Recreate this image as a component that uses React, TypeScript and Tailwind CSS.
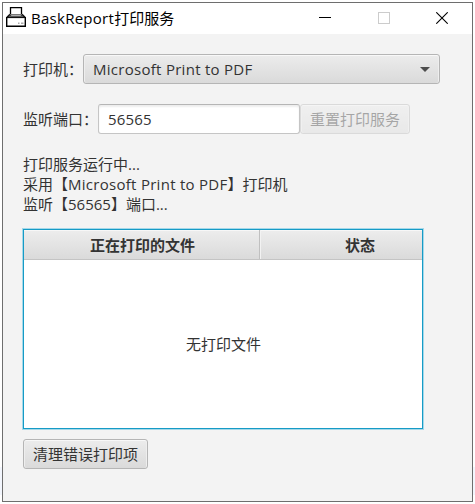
import type { ReactNode } from "react";
import clsx from "clsx";

interface ButtonProps {
  children: ReactNode;
  disabled?: boolean;
  className?: string;
}

function Button({ children, disabled, className }: ButtonProps) {
  return (
    <button
      type="button"
      disabled={disabled}
      className={clsx(
        "flex h-[30px] shrink-0 items-center justify-center whitespace-nowrap rounded-[3px] border border-[#b5b5b5] bg-linear-to-b from-[#ececec] to-[#dadada] text-[15px] leading-5 shadow-[inset_0_1px_0_#f8f8f8,inset_1px_0_0_#eeeeee,inset_-1px_0_0_#eeeeee]",
        disabled && "opacity-40",
        className,
      )}
    >
      {children}
    </button>
  );
}

function PrinterIcon() {
  return (
    <svg className="mb-[3px]" width="20" height="20" viewBox="0 0 20 20" fill="none">
      <path d="M4.5 9V0.5H15.5V9" stroke="#000" strokeWidth="1.3" />
      <path d="M4 7.8H16" stroke="#777" strokeWidth="1.6" />
      <path d="M4 7.4L1 10.2M16 7.4L19 10.2" stroke="#111" strokeWidth="1.5" />
      <path d="M1 10.2H19" stroke="#111" strokeWidth="1.8" />
      <path d="M0.7 10V19.2H19.3V10" stroke="#000" strokeWidth="1.4" />
      <path d="M12 16.3H13.5M15 16.3H17.5" stroke="#aaa" strokeWidth="1.5" />
    </svg>
  );
}

function TitleBar() {
  return (
    <div className="flex h-[31px] items-center bg-white pl-[3px] text-black">
      <PrinterIcon />
      <span className="ml-[5px] flex-1 whitespace-nowrap pb-0.5 text-[15px] leading-5">
        <span className="tracking-[0.27px]">BaskReport</span>打印服务
      </span>
      <div className="flex items-center gap-[46px] pb-px pr-[24px]">
        <svg width="13" height="12" viewBox="0 0 13 12" shapeRendering="crispEdges">
          <path d="M0 5.5H12" stroke="#000" />
        </svg>
        <svg width="12" height="12" viewBox="0 0 12 12" fill="none" shapeRendering="crispEdges">
          <path d="M0.5 0.5H11.5V11.5H0.5Z" stroke="#cccccc" />
        </svg>
        <svg width="12" height="12" viewBox="0 0 12 12">
          <path d="M0.3 0.3L11.7 11.7M11.7 0.3L0.3 11.7" stroke="#000" strokeWidth="1.1" />
        </svg>
      </div>
    </div>
  );
}

function PrintTable() {
  return (
    <div className="mt-[15px] flex h-[200px] w-[400px] flex-col border border-[#169bc6] bg-white shadow-[0_0_0_1px_#a5d8e9]">
      <div className="flex h-[30px] border-b border-[#c4c4c4] bg-linear-to-b from-[#ededed] to-[#dadada] text-[15px] font-bold leading-[30px] shadow-[inset_0_1px_0_#f7f7f7]">
        <div className="w-[236px] border-r border-[#c0c0c0] text-center">
          <span className="pl-0.5">正在打印的文件</span>
        </div>
        <div className="flex-1 overflow-hidden border-l border-[#f2f2f2]">
          <div className="w-[198px] text-center">状态</div>
        </div>
      </div>
      <div className="flex flex-1 items-center justify-center pb-px pl-px text-[15px]">无打印文件</div>
    </div>
  );
}

export default function App() {
  return (
    <div className="h-[504px] w-[475px] overflow-hidden bg-[linear-gradient(to_bottom,#fff_467px,#f3f6fd_467px,#f3f6fd_495px,#fff_495px)] pl-[2px] pt-[2px] font-['Open_Sans','Noto_Sans_CJK_SC',sans-serif] text-[#333333]">
      <div className="h-[500px] w-[471px] border border-[#6e6e6e] bg-[#f3f3f3]">
        <TitleBar />
        <div className="px-5 pt-5 text-[15px] leading-5">
          <div className="flex h-[30px] items-center">
            <span className="w-[60px] shrink-0 whitespace-nowrap">打印机：</span>
            <Button className="w-[357px] justify-between! pl-[9px] pr-[9px]">
              <span className="tracking-[0.28px]">Microsoft Print to PDF</span>
              <svg width="10" height="5" viewBox="0 0 10 5">
                <path d="M0 0H10L5 5Z" fill="#4d4d4d" />
              </svg>
            </Button>
          </div>
          <div className="mt-5 flex h-[30px] items-center">
            <span className="w-[75px] shrink-0 whitespace-nowrap">监听端口：</span>
            <input
              readOnly
              value="56565"
              className="h-[30px] w-[202px] rounded-[3px] border border-[#c5c5c5] border-t-[#b5b5b5] bg-white pl-[9px] tracking-[0.15px] shadow-[inset_0_2px_2px_#eeeeee] outline-none"
            />
            <Button disabled className="w-[110px]">
              重置打印服务
            </Button>
          </div>
          <div className="mt-[20px] whitespace-nowrap">
            <p>打印服务运行中...</p>
            <p>
              采用【<span className="tracking-[0.28px]">Microsoft Print to PDF</span>】打印机
            </p>
            <p>监听【56565】端口...</p>
          </div>
          <PrintTable />
          <Button className="mt-[10px] w-[125px]">清理错误打印项</Button>
        </div>
      </div>
    </div>
  );
}
